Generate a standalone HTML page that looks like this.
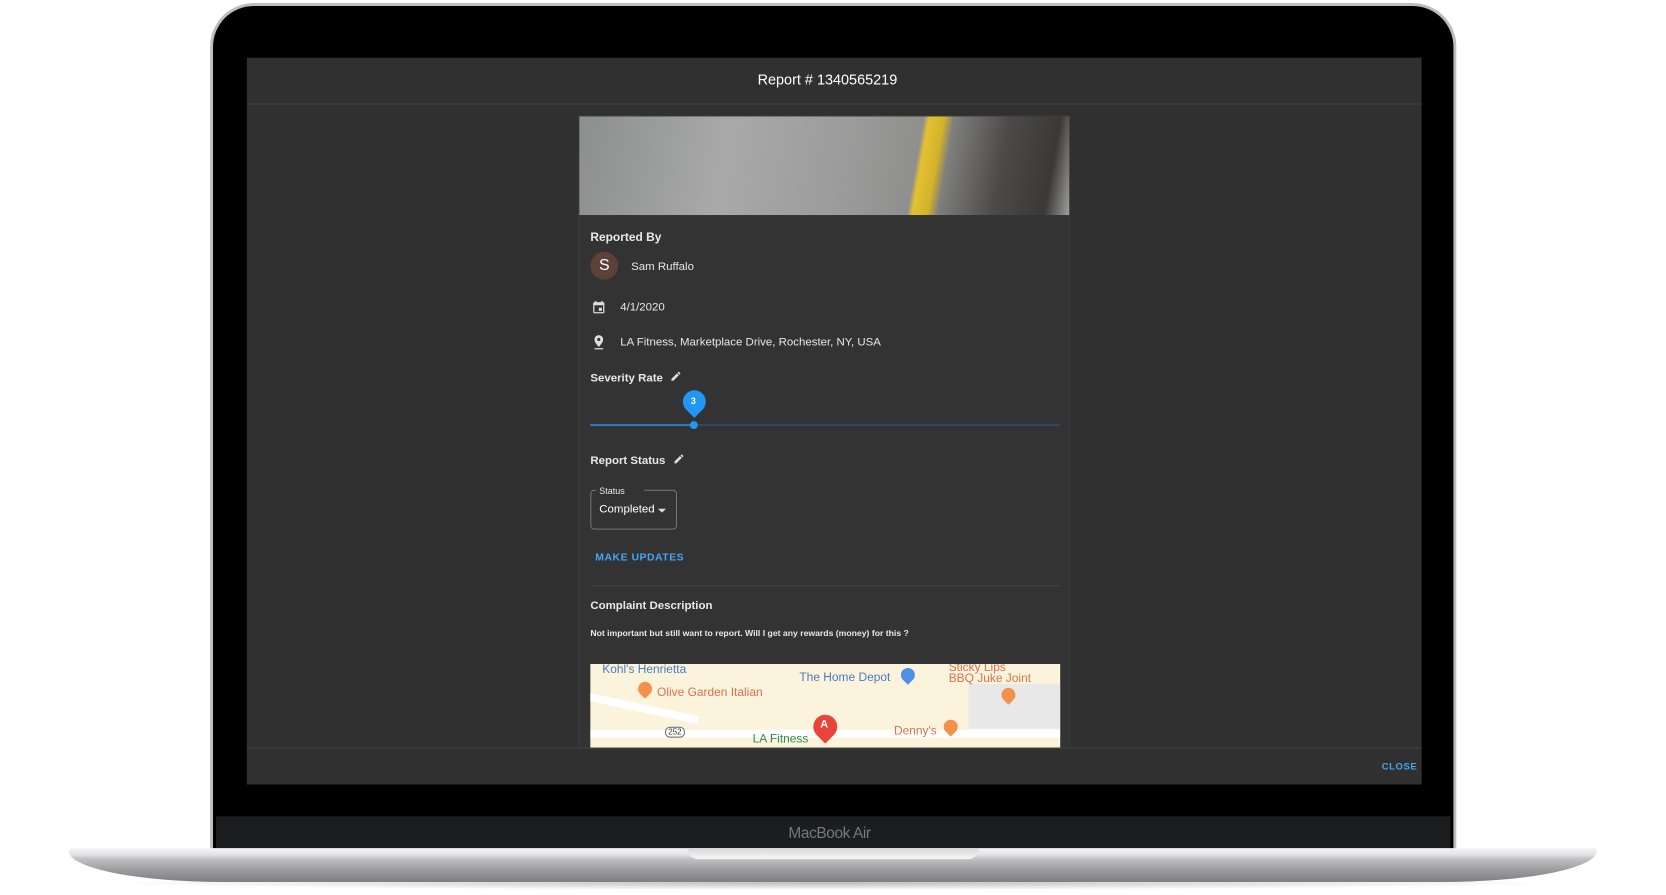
<!DOCTYPE html>
<html><head><meta charset="utf-8"><style>
*{margin:0;padding:0;box-sizing:border-box}
body{width:1666px;height:895px;background:#fff;position:relative;overflow:hidden;font-family:"Liberation Sans",Arial,sans-serif}
#w{position:absolute;left:0;top:0;width:1666px;height:895px;transform:scale(0.9955);transform-origin:0 0}
.abs{position:absolute}
.bezel{left:211px;top:3px;width:1252px;height:852px;background:#000;border-radius:44px 44px 0 0;border:3px solid #bdbdbd;border-bottom:none}
.chin{left:217px;top:820px;width:1240px;height:34px;background:#1c1d1f}
.app{left:248px;top:58px;width:1180px;height:730px;background:#303030}
.base{left:69px;top:852px;width:1535px;height:34px;background:linear-gradient(#f4f4f6 0,#e2e2e4 20%,#c4c4c6 30%,#a0a0a2 60%,#7e7e80 100%);border-radius:3px 3px 160px 160px/3px 3px 32px 32px}
.notch{left:691px;top:852px;width:292px;height:11px;background:linear-gradient(#d8d8da,#f7f7f7);border-radius:0 0 10px 10px}
.t{position:absolute;color:#e8e8e8;font-size:12px;white-space:nowrap}
.b{font-weight:bold}
.c{position:absolute;left:0;top:2px;width:1666px;height:895px}
</style></head><body><div id="w">
<div class="abs" style="left:100px;top:880px;width:1470px;height:14px;background:radial-gradient(ellipse at center,rgba(0,0,0,.25),rgba(0,0,0,0) 70%)"></div>
<div class="abs bezel"></div>
<div class="abs" style="left:834px;top:66px;width:6px;height:6px;border-radius:50%;background:#222"></div>
<div class="abs chin"></div>
<div class="t" style="left:792px;top:829px;color:#777;font-size:15.5px;letter-spacing:-0.4px">MacBook Air</div>
<div class="abs base"></div>
<div class="abs notch"></div>
<div class="abs app"></div>
<div class="abs" style="left:248px;top:104px;width:1180px;height:1px;background:#444"></div>
<div class="t" style="left:761px;top:73px;font-size:14.5px;color:#fff">Report # 1340565219</div>
<!-- card -->
<div class="abs" style="left:581px;top:116px;width:494px;height:635px;background:#333;border:1px solid #3d3d3d;border-bottom:none"></div>
<div class="abs" style="left:582px;top:117px;width:492px;height:99px;background:linear-gradient(100deg,#8d8e8e 0%,#a8a9a8 30%,#9a9b9a 55%,#8f8f8e 68%,#e2c232 69%,#d4b22a 72%,#7f7f7e 74%,#4b4a48 85%,#3a3936 95%,#9e9e9c 100%)"></div>
<div class="c">
<div class="t b" style="left:593px;top:229px">Reported By</div>
<div class="abs" style="left:593px;top:251px;width:28px;height:28px;border-radius:50%;background:#5d4037;color:#fff;font-size:16px;text-align:center;line-height:28px">S</div>
<div class="t" style="left:634px;top:260px;font-size:11.5px">Sam Ruffalo</div>
<svg class="abs" style="left:594px;top:299px" width="15" height="15" viewBox="0 0 24 24"><path fill="#ddd" d="M19 4h-1V2h-2v2H8V2H6v2H5a2 2 0 0 0-2 2v14a2 2 0 0 0 2 2h14a2 2 0 0 0 2-2V6a2 2 0 0 0-2-2zm0 16H5V9h14v11zM12 13h5v5h-5z"/></svg>
<div class="t" style="left:623px;top:301px;font-size:11.5px">4/1/2020</div>
<svg class="abs" style="left:594px;top:333px" width="15" height="17" viewBox="0 0 24 26"><path fill="#ddd" d="M12 2a7 7 0 0 0-7 7c0 5 7 12 7 12s7-7 7-12a7 7 0 0 0-7-7zm0 9.5A2.5 2.5 0 1 1 12 6.5a2.5 2.5 0 0 1 0 5zM5 23h14v2H5z"/></svg>
<div class="t" style="left:623px;top:336px;font-size:11.5px">LA Fitness, Marketplace Drive, Rochester, NY, USA</div>
<div class="t b" style="left:593px;top:372px;font-size:11.5px">Severity Rate</div>
<svg class="abs" style="left:673px;top:370px" width="12" height="12" viewBox="0 0 24 24"><path fill="#ddd" d="M3 17.25V21h3.75L17.8 9.94l-3.75-3.75L3 17.25zM20.7 7.04a1 1 0 0 0 0-1.41l-2.34-2.34a1 1 0 0 0-1.41 0l-1.83 1.83 3.75 3.75 1.83-1.83z"/></svg>
</div>
<div class="abs" style="left:593px;top:426px;width:472px;height:2px;background:#2c4a66"></div>
<div class="abs" style="left:593px;top:426px;width:104px;height:2px;background:#2a7ac8"></div>
<div class="abs" style="left:693px;top:423px;width:8px;height:8px;border-radius:50%;background:#2196f3"></div>
<div class="abs" style="left:686px;top:392px;width:23px;height:23px;border-radius:50% 50% 50% 0;transform:rotate(-45deg);background:#2196f3"></div>
<div class="t b" style="left:694px;top:398px;font-size:9px;color:#fff">3</div>
<div class="c">
<div class="t b" style="left:593px;top:455px;font-size:11.5px">Report Status</div>
<svg class="abs" style="left:676px;top:453px" width="12" height="12" viewBox="0 0 24 24"><path fill="#ddd" d="M3 17.25V21h3.75L17.8 9.94l-3.75-3.75L3 17.25zM20.7 7.04a1 1 0 0 0 0-1.41l-2.34-2.34a1 1 0 0 0-1.41 0l-1.83 1.83 3.75 3.75 1.83-1.83z"/></svg>
</div>
<div class="abs" style="left:593px;top:492px;width:87px;height:40px;border:1px solid #777;border-radius:4px"></div>
<div class="abs" style="left:599px;top:488px;width:48px;height:8px;background:#333"></div>
<div class="t" style="left:602px;top:488px;font-size:9px">Status</div>
<div class="t" style="left:602px;top:506px;font-size:11.5px;color:#fff">Completed</div>
<div class="abs" style="left:661px;top:511px;border:4px solid transparent;border-top-color:#ddd;border-bottom:none"></div>
<div class="t b" style="left:598px;top:554px;font-size:10.5px;color:#42a5f5;letter-spacing:.5px">MAKE UPDATES</div>
<div class="abs" style="left:593px;top:588px;width:472px;height:1px;background:#444"></div>
<div class="t b" style="left:593px;top:603px;font-size:11.5px">Complaint Description</div>
<div class="t b" style="left:593px;top:631px;font-size:8.7px">Not important but still want to report. Will I get any rewards (money) for this ?</div>
<!-- map -->
<div class="abs" style="left:593px;top:667px;width:472px;height:84px;background:#fcf3dc;overflow:hidden">
<div class="abs" style="left:0;top:66px;width:472px;height:8px;background:#fff"></div>
<div class="abs" style="left:-10px;top:40px;width:120px;height:8px;background:#fff;transform:rotate(12deg)"></div>
<div class="abs" style="left:380px;top:20px;width:92px;height:45px;background:#e8e8e8"></div>
<div class="t" style="left:12px;top:-2px;font-size:12px;color:#4a7bbf">Kohl's Henrietta</div>
<div class="t" style="left:210px;top:6px;font-size:12px;color:#4a7bbf">The Home Depot</div>
<div class="abs" style="left:312px;top:4px;width:14px;height:14px;border-radius:50% 50% 50% 0;transform:rotate(-45deg);background:#4d90e6"></div>
<div class="t" style="left:360px;top:-4px;font-size:12px;color:#d9734a">Sticky Lips</div>
<div class="t" style="left:360px;top:7px;font-size:12px;color:#d9734a">BBQ Juke Joint</div>
<div class="abs" style="left:413px;top:24px;width:14px;height:14px;border-radius:50% 50% 50% 0;transform:rotate(-45deg);background:#f5904a"></div>
<div class="abs" style="left:48px;top:18px;width:14px;height:14px;border-radius:50% 50% 50% 0;transform:rotate(-45deg);background:#f5904a"></div>
<div class="t" style="left:67px;top:21px;font-size:12px;color:#d9734a">Olive Garden Italian</div>
<div class="abs" style="left:75px;top:63px;width:20px;height:11px;border:1px solid #666;border-radius:5px;background:#fff;font-size:8px;text-align:center;line-height:9px;color:#333">252</div>
<div class="t" style="left:163px;top:68px;font-size:12px;color:#2e8b4e">LA Fitness</div>
<div class="abs" style="left:224px;top:51px;width:24px;height:24px;border-radius:50% 50% 50% 0;transform:rotate(-45deg);background:#e8443a"></div>
<div class="t b" style="left:231px;top:55px;font-size:11px;color:#fff">A</div>
<div class="t" style="left:305px;top:60px;font-size:12px;color:#d9734a">Denny's</div>
<div class="abs" style="left:355px;top:56px;width:14px;height:14px;border-radius:50% 50% 50% 0;transform:rotate(-45deg);background:#f5904a"></div>
</div>
<!-- footer -->
<div class="abs" style="left:248px;top:751px;width:1180px;height:37px;background:#303030;border-top:1px solid #444"></div>
<div class="t b" style="left:1388px;top:765px;font-size:9.5px;color:#42a5f5;letter-spacing:.6px">CLOSE</div>
</div></body></html>
